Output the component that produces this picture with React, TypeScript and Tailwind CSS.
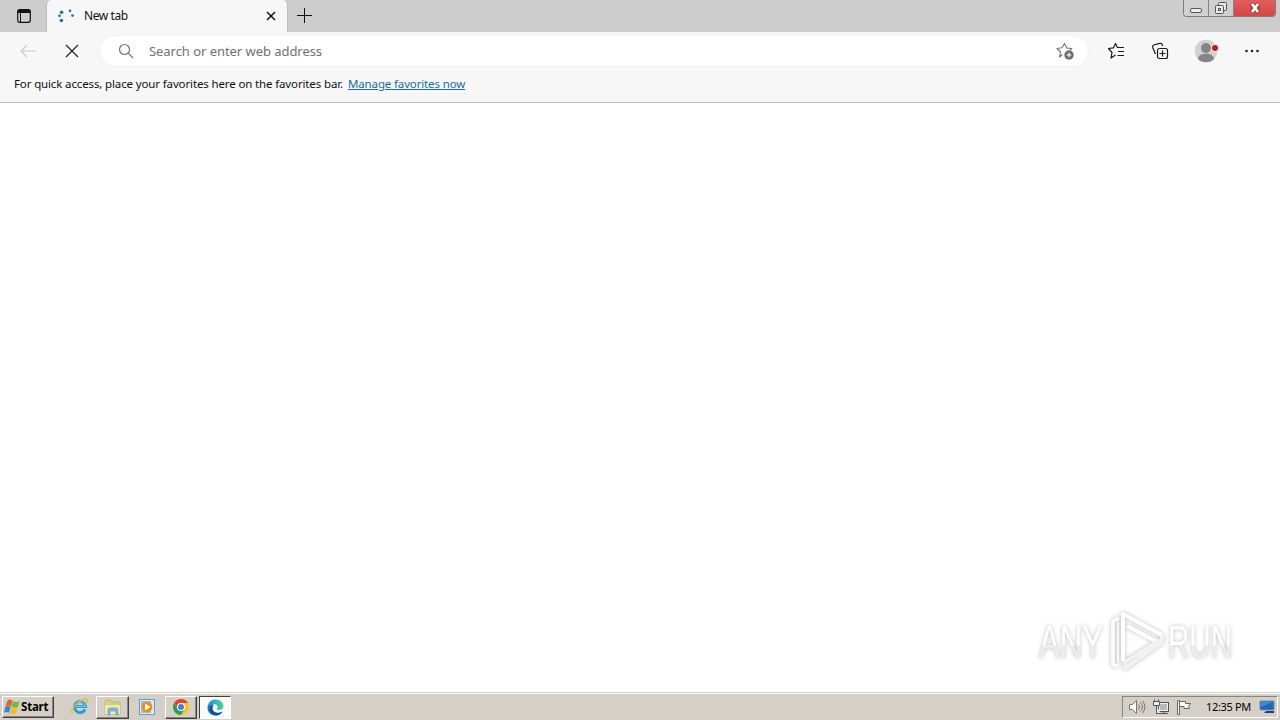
import React from 'react';

function TabStrip() {
  return (
    <header className="flex h-8 shrink-0 items-start bg-[#cdcdcd]">
      <div className="flex h-8 w-[46px] shrink-0 items-center justify-center pl-[2px]">
        <svg width="16" height="16" viewBox="0 0 16 16" fill="none">
          <rect x="1.7" y="1.7" width="12.6" height="12.6" rx="2" stroke="#111" strokeWidth="1.2" />
          <path d="M1.5 5V3.5a2 2 0 0 1 2-2h9a2 2 0 0 1 2 2V5Z" fill="#111" />
          <path d="M4.5 5v9" stroke="#111" />
        </svg>
      </div>
      <div className="flex h-8 w-[242px] shrink-0 items-center rounded-t-[5px] border-x border-[#bcbcbc] bg-[#f7f7f7] pl-[10px]">
        <svg width="20" height="16" viewBox="0 0 20 16" fill="#2a719f" className="shrink-0">
          <circle cx="4.6" cy="4.3" r="1.8" />
          <circle cx="2.5" cy="7.8" r="1.4" />
          <circle cx="4.4" cy="12.5" r="1.8" />
          <circle cx="13" cy="2.8" r="1.4" />
          <circle cx="15.500" cy="7.6" r="1.4" />
        </svg>
        <span className="ml-[7px] w-[150px] text-[12px] leading-4 tracking-[-0.4px] text-[#111]">New tab</span>
        <svg width="10" height="10" viewBox="0 0 10 10" className="ml-[32px] shrink-0" stroke="#111" strokeWidth="1.5">
          <path d="M1 1l8 8M9 1L1 9" />
        </svg>
      </div>
      <svg width="15" height="15" viewBox="0 0 15 15" className="mt-[8px] ml-[9px] shrink-0" stroke="#111" strokeWidth="1">
        <path d="M7.500 0v15M0 7.500h15" />
      </svg>
      <div className="mr-[4px] ml-auto flex h-[17px] w-[93px] overflow-hidden rounded-b-[4px] border border-t-0 border-[#7d7d7d]">
        <div className="flex w-[25px] items-end justify-center border-r border-[#858585] bg-[#d0d0d0] pb-[3px]">
          <div className="h-[5px] w-[12px] rounded-[2px] border border-[#555] bg-[#eee]" />
        </div>
        <div className="flex w-[25px] items-center justify-center border-r border-[#858585] bg-[#d0d0d0]">
          <svg width="14" height="14" viewBox="0 0 14 14" fill="#e9e9e9" stroke="#555">
            <rect x="4.5" y="1.5" width="8" height="8" rx="1" />
            <rect x="1.5" y="4.5" width="8" height="8" rx="1" />
            <rect x="4.500" y="7.500" width="2" height="2" />
          </svg>
        </div>
        <div className="flex flex-1 items-center justify-center bg-linear-to-b from-[#e35c5c] to-[#d74444]">
          <svg width="12" height="12" viewBox="0 0 12 12">
            <path d="M2.5 2l7 8M9.5 2l-7 8" stroke="#803333" strokeWidth="4.500" />
            <path d="M3 2l6 8M9 2l-6 8" stroke="#fff" strokeWidth="2.800" />
          </svg>
        </div>
      </div>
    </header>
  );
}

function Toolbar() {
  return (
    <div className="flex h-[38px] shrink-0 items-center bg-[#f7f7f7]">
      <svg width="18" height="16" viewBox="0 0 18 16" className="ml-[19px] shrink-0" fill="none" stroke="#cbcbcb" strokeWidth="1.2">
        <path d="M17 8H2M8 2L2 8l6 6" />
      </svg>
      <svg width="14" height="14" viewBox="0 0 14 14" className="ml-[28px] shrink-0" stroke="#222" strokeWidth="1.2">
        <path d="M1 1l12 12M13 1L1 13" />
      </svg>
      <div className="ml-[20px] flex h-[32px] w-[990px] shrink-0 items-center rounded-full border border-[#f1f1f1] bg-white pl-[18px]">
        <svg width="16" height="16" viewBox="0 0 16 16" className="shrink-0" fill="none" stroke="#737373" strokeWidth="1.2">
          <circle cx="6.500" cy="6.500" r="5" />
          <path d="M10.200 10.200L15 15" />
        </svg>
        <span className="ml-[15px] w-[300px] whitespace-nowrap text-[13px] leading-5 tracking-[-0.05px] text-[#707070]">Search or enter web address</span>
        <svg width="19" height="18" viewBox="0 0 19 18" className="mr-[13px] ml-auto shrink-0" fill="none">
          <path d="M6.500 12.500L3.500 15l1-5L1 6.500l5-.7L8.500 1.500 10.700 6l5 .5-1.500 1.500" stroke="#727272" strokeWidth="1.1" strokeLinejoin="round" />
          <circle cx="13" cy="13" r="4.700" fill="#6c6c6c" />
          <path d="M13 10.500v5M10.500 13h5" stroke="#fff" strokeWidth="1.1" />
        </svg>
      </div>
      <svg width="18" height="18" viewBox="0 0 18 18" className="ml-[18px] shrink-0" fill="none" stroke="#1a1a1a" strokeWidth="1.2" strokeLinejoin="round">
        <path d="M8.500 13L4 16l1-5.500L1.500 6.500l5-.7L8.500 1.500l2 4H17M11 9.500h6M10.500 13.500H17" />
      </svg>
      <svg width="18" height="18" viewBox="0 0 18 18" className="ml-[26px] shrink-0" fill="none" stroke="#1a1a1a" strokeWidth="1.2">
        <rect x="6.500" y="6.500" width="10" height="10" rx="2" />
        <path d="M11.500 8.500v6M8.500 11.500h6M4.500 12L1.700 5.500a2 2 0 0 1 1-2.500l6-1.600a2 2 0 0 1 2.500 1.400l.5 1.200" />
      </svg>
      <svg width="24" height="24" viewBox="0 0 24 24" className="ml-[25px] shrink-0">
        <circle cx="12" cy="12" r="11.300" fill="#d1d1cf" />
        <circle cx="12" cy="9" r="5" fill="#858585" />
        <path d="M4 20c0-7 16-7 16 0a11.300 11.300 0 0 1-16 0Z" fill="#858585" />
        <circle cx="21" cy="9" r="4" fill="#f1f1f1" />
        <circle cx="21" cy="9" r="3" fill="#d90d18" />
      </svg>
      <svg width="16" height="4" viewBox="0 0 16 4" className="ml-[26px] shrink-0" fill="#202020">
        <circle cx="2.500" cy="2" r="1.300" /><circle cx="8" cy="2" r="1.300" /><circle cx="13.500" cy="2" r="1.300" />
      </svg>
    </div>
  );
}

function Watermark() {
  return (
    <svg width="232" height="72" viewBox="0 0 232 72" className="mr-[20px] mb-[16px] drop-shadow-[0_0_2px_#bcbcbc]">
      <defs>
        <linearGradient id="fade" x1="0" y1="0" x2="0" y2="1">
          <stop offset="0.57" stopColor="#ffffff" />
          <stop offset="0.58" stopColor="#ededed" />
        </linearGradient>
      </defs>
      <g fill="url(#fade)" fontFamily="'Liberation Sans', sans-serif" fontSize="47">
        <text x="11" y="54" textLength="64" lengthAdjust="spacingAndGlyphs">ANY</text>
        <text x="140" y="54" textLength="64" lengthAdjust="spacingAndGlyphs">RUN</text>
      </g>
      <g fill="none" strokeLinejoin="round" strokeWidth="4">
        <path d="M91 14l-6 3v44l5 1" stroke="#fafafa" />
        <path d="M95 57V10l39 21" stroke="#ffffff" />
        <path d="M99 22l32 17" stroke="#ffffff" />
        <path d="M134 31v7L97 64v-6l35-22" stroke="#f1f1f1" />
        <path d="M90 18v41" stroke="#f7f7f7" strokeWidth="2" />
      </g>
    </svg>
  );
}

function Ie() {
  return (
    <svg width="18" height="18" viewBox="0 0 18 18" fill="none">
      <path d="M14 11.500a5.500 5.500 0 1 1 .5-3H5" stroke="#2d9bdb" strokeWidth="3" />
      <path d="M5 8.500h9.500a5.500 5.500 0 0 0-9-3" stroke="#79cbef" strokeWidth="1" />
      <path d="M2 15C-2 16 2 8 8 4c6-4 10-4 8 1" stroke="#e7bc36" strokeWidth="1.500" />
    </svg>
  );
}

function Folder() {
  return (
    <svg width="18" height="17" viewBox="0 0 18 17">
      <path d="M1 3l1-2h5l1 2h8v12H1Z" fill="#e7ce70" stroke="#ba9d4a" strokeWidth=".6" />
      <path d="M3 4h11v5H3Z" fill="#b8d795" />
      <path d="M1 6h15v9H1Z" fill="#f8e9a2" />
      <path d="M4 16v-5q0-2 2-2h6q2 0 2 2v5h-2v-4H6v4Z" fill="#77bce4" stroke="#4f9cc7" strokeWidth=".6" />
    </svg>
  );
}

function Player() {
  return (
    <svg width="16" height="16" viewBox="0 0 16 16">
      <rect x=".5" y=".5" width="15" height="15" fill="#d9ecfa" stroke="#5d9fce" />
      <rect x="2" y="2" width="10" height="12" fill="#94c6ea" />
      <circle cx="8" cy="8" r="5.500" fill="#f28c15" />
      <path d="M6 4.500v7L11.500 8Z" fill="#fff" />
    </svg>
  );
}

function Chrome() {
  return (
    <svg width="16" height="16" viewBox="0 0 16 16">
      <circle cx="8" cy="8" r="8" fill="#f9c51b" />
      <path d="M1.070 4A8 8 0 0 1 14.930 4H8L4.540 10Z" fill="#df4436" />
      <path d="M1.070 4A8 8 0 0 0 8 16l3.460-6H4.540Z" fill="#269e59" />
      <circle cx="8" cy="8" r="4" fill="#fff" /><circle cx="8" cy="8" r="3" fill="#3d7ded" />
    </svg>
  );
}

function Edge() {
  return (
    <svg width="17" height="17" viewBox="0 0 17 17">
      <defs>
        <linearGradient id="edge"><stop stopColor="#1b91d0" /><stop offset="0.6" stopColor="#30bfc4" /><stop offset="1" stopColor="#5dcf70" /></linearGradient>
      </defs>
      <path d="M.5 8C1 3 4.500.5 8.500.5c5 0 8 3.500 8 6.500 0 2.500-2 4-4.500 4-2 0-2.700-1-1.700-2 1-1.500-.3-3.500-3.300-4C4 4.700 1.500 6 .5 8Z" fill="url(#edge)" />
      <path d="M.5 8c1-2.500 4-3.500 6.500-3C4.500 6.500 4.500 10 6.500 12c2.500 2.300 6 2 9 .5-2 3-4.500 4-7 4-5 0-8.300-4-8-8.500Z" fill="#1b78c2" />
      <path d="M7 6.300C4.300 8.500 5 13.500 10 14.300c2 .3 4-.5 5.500-1.800-1.700 3-4.500 4-6.500 4-4-.3-6.500-3.300-6.500-6.500 0-2 1.500-3.500 4.500-3.700Z" fill="#114f91" />
    </svg>
  );
}

const RAISED = 'border border-t-white border-l-white border-r-[#404040] border-b-[#404040] shadow-[inset_-1px_-1px_0_#88857f]';

function Taskbar() {
  return (
    <footer className="flex h-[28px] shrink-0 items-center border-t border-[#d4d0c8] bg-[#d4d0c8] pt-px pl-[2px] pr-[2px] shadow-[inset_0_1px_0_#ffffff]">
      <button className={`flex h-[22px] w-[52px] shrink-0 items-center pl-px ${RAISED}`}>
        <svg width="16" height="16" viewBox="0 0 16 16" className="shrink-0">
          <path d="M3.500 1.500q2.500-2 5 0L7 7.500q-3-2-5.500 0Z" fill="#e95d2b" />
          <path d="M9 2q3 2 6.500 0L14 8q-3 1.500-6.500 0Z" fill="#73b940" />
          <path d="M1.200 8q3-2 5.500 0L5 14q-3-2-5 0Z" fill="#3985cf" />
          <path d="M7.300 8.500q3 2 6.500 0L12 14.500q-3 1.500-6 0Z" fill="#f2bd27" />
        </svg>
        <span className="pl-px text-[11.500px] font-bold leading-4 tracking-[-0.2px] text-black">Start</span>
      </button>
      <div className="ml-[17px] flex w-[18px] shrink-0 justify-center"><Ie /></div>
      <div className={`ml-[7px] flex h-[23px] w-[33px] shrink-0 items-center justify-center ${RAISED}`}><Folder /></div>
      <div className="ml-[10px] flex w-[16px] shrink-0 justify-center"><Player /></div>
      <div className={`ml-[10px] flex h-[23px] w-[32px] shrink-0 items-center justify-center ${RAISED}`}><Chrome /></div>
      <div className="ml-[2px] flex h-[23px] w-[32px] shrink-0 items-center justify-center border border-t-[#404040] border-r-white border-b-white border-l-[#404040] bg-[#fafafa]"><Edge /></div>
      <div className="ml-auto flex h-[22px] w-[156px] items-center border border-t-[#88857f] border-r-white border-b-white border-l-[#88857f] pl-[6px]">
        <svg width="17" height="16" viewBox="0 0 17 16" className="shrink-0" fill="#fafafa" stroke="#777">
          <path d="M.5 5.500h3l4-4v13l-4-4h-3Z" />
          <path d="M9.500 5.500q2 2.500 0 5M11.500 3.500q4 4.500 0 9M13.500 2q5 6 0 12" fill="none" />
        </svg>
        <svg width="17" height="16" viewBox="0 0 17 16" className="ml-[7px] shrink-0" fill="#eee" stroke="#555">
          <rect x="5.500" y="3.500" width="10" height="9" /><path d="M6 14.500h9M11 12v2" />
          <rect x="7" y="5" width="7" height="6" fill="#b9b9b9" stroke="none" />
          <path d="M.5 2.500h6v4h-6Zm1-2v2m4-2v2M3.500 6.500v8h4" />
        </svg>
        <svg width="16" height="16" viewBox="0 0 16 16" className="ml-[6px] shrink-0" fill="#fafafa" stroke="#666">
          <path d="M1.500 15.500v-14h2v14ZM3.500 2.500h6v2h5l-2 3 1 2H8v-2H3.500Z" />
        </svg>
        <span className="ml-[14px] w-[46px] shrink-0 whitespace-nowrap text-[11px] leading-4 tracking-[-0.35px] text-black">12:35 PM</span>
        <svg width="17" height="14" viewBox="0 0 17 14" className="ml-[7px] shrink-0">
          <path d="M1 1h14v9H1Z" fill="#2465b7" stroke="#6f91b7" />
          <path d="M2 2h12L2 7Z" fill="#3c8bd3" /><path d="M7 11h8v2H5Z" fill="#263e68" />
        </svg>
      </div>
    </footer>
  );
}

export default function App() {
  return (
    <div className="flex h-[720px] w-[1280px] flex-col overflow-hidden bg-white font-['Noto_Sans',sans-serif]">
      <TabStrip />
      <Toolbar />
      <div className="flex h-[33px] shrink-0 items-start border-b border-[#b9b9b9] bg-[#f7f7f7] pt-[6px] pl-[14px] text-[11.500px] leading-4">
        <span className="w-[334px] shrink-0 whitespace-nowrap tracking-[-0.135px] text-[#111]">For quick access, place your favorites here on the favorites bar.</span>
        <a className="whitespace-nowrap tracking-[-0.14px] text-[#176ca5] underline">Manage favorites now</a>
      </div>
      <main className="flex flex-1 items-end justify-end bg-white"><Watermark /></main>
      <Taskbar />
    </div>
  );
}
